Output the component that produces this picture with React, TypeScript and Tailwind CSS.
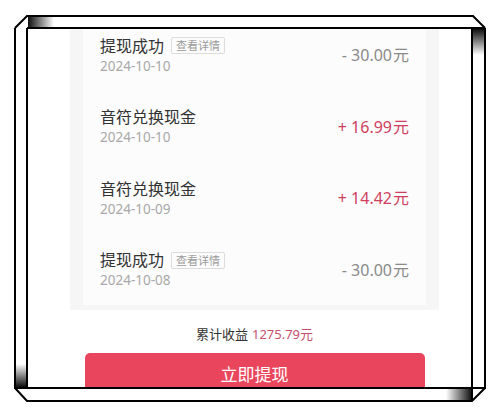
import React from "react";

type Row = { title: string; date: string; amount: string; plus: boolean; badge: boolean };

const rows: Row[] = [
  { title: "提现成功", date: "2024-10-10", amount: "- 30.00", plus: false, badge: true },
  { title: "音符兑换现金", date: "2024-10-10", amount: "+ 16.99", plus: true, badge: false },
  { title: "音符兑换现金", date: "2024-10-09", amount: "+ 14.42", plus: true, badge: false },
  { title: "提现成功", date: "2024-10-08", amount: "- 30.00", plus: false, badge: true },
];

function Frame() {
  return (
    <svg className="absolute left-0 top-0 pointer-events-none" width="500" height="418" viewBox="0 0 500 418">
      <defs>
        <linearGradient id="gTop" x1="0" y1="0" x2="1" y2="0">
          <stop offset="0" stopColor="#000" stopOpacity="0.95" />
          <stop offset="1" stopColor="#000" stopOpacity="0" />
        </linearGradient>
        <linearGradient id="gRight" x1="0" y1="0" x2="0" y2="1">
          <stop offset="0" stopColor="#000" stopOpacity="0.95" />
          <stop offset="1" stopColor="#000" stopOpacity="0" />
        </linearGradient>
        <linearGradient id="gLeft" x1="0" y1="1" x2="0" y2="0">
          <stop offset="0" stopColor="#000" stopOpacity="0.95" />
          <stop offset="1" stopColor="#000" stopOpacity="0" />
        </linearGradient>
        <linearGradient id="gBottom" x1="1" y1="0" x2="0" y2="0">
          <stop offset="0" stopColor="#000" stopOpacity="0.95" />
          <stop offset="1" stopColor="#000" stopOpacity="0" />
        </linearGradient>
      </defs>
      <rect x="28" y="17" width="26" height="10" fill="url(#gTop)" />
      <rect x="473" y="29" width="11" height="26" fill="url(#gRight)" />
      <rect x="16" y="364" width="10" height="23" fill="url(#gLeft)" />
      <rect x="446" y="389" width="26" height="11" fill="url(#gBottom)" />
      <g fill="none" stroke="#000" strokeWidth="2" strokeLinejoin="miter">
        <polyline points="15,28 27,16 473,16 485,28" />
        <line x1="27" y1="28" x2="485" y2="28" />
        <line x1="15" y1="28" x2="15" y2="388" />
        <line x1="27" y1="28" x2="27" y2="388" />
        <line x1="472" y1="28" x2="472" y2="401" />
        <line x1="485" y1="28" x2="485" y2="388" />
        <line x1="14" y1="388" x2="486" y2="388" />
        <polyline points="15,388 27,401 472,401 485,388" />
      </g>
    </svg>
  );
}

export default function App() {
  return (
    <div
      className="relative w-[500px] h-[418px] bg-white overflow-hidden"
      style={{ fontFamily: '"Noto Sans", "Noto Sans CJK SC", sans-serif' }}
    >
      <div className="pt-[29px] pl-[28px]">
        <div className="w-[453px] h-[359px] overflow-hidden bg-white flex flex-col items-center">
          <div className="mt-[-10px] w-[369px] bg-[#f6f6f6] px-[13px] pb-[5px]">
            <div className="bg-[#fcfcfc] px-[17px]">
              {rows.map((r, i) => (
                <div key={i} className="h-[71.5px] flex items-center justify-between">
                  <div className="flex flex-col">
                    <div className="flex items-center h-[22px]">
                      <span className="text-[16px] leading-[22px] text-[#333]">{r.title}</span>
                      {r.badge && (
                        <span className="ml-[7px] h-[17px] px-[4px] flex items-center border border-[#dcdcdc] rounded-[2px] text-[11px] leading-none text-[#9a9a9a]">
                          查看详情
                        </span>
                      )}
                    </div>
                    <span className="text-[13.5px] leading-[18px] text-[#a8a8a8]">{r.date}</span>
                  </div>
                  <span
                    className={
                      "text-[16px] leading-[22px] mt-[1px] " + (r.plus ? "text-[#cf3f5e]" : "text-[#8a8a8a]")
                    }
                  >
                    {r.amount}
                    <span className="ml-[1px]">元</span>
                  </span>
                </div>
              ))}
            </div>
          </div>
          <div className="mt-[14px] h-[20px] flex items-center text-[13px] leading-[20px]">
            <span className="text-[#333]">累计收益</span>
            <span className="ml-[4px] text-[#c4506d]">1275.79元</span>
          </div>
          <div className="mt-[9px] w-[340px] h-[44px] shrink-0 rounded-[5px] bg-[#e9465d] flex items-center justify-center text-white text-[17px]">
            立即提现
          </div>
        </div>
      </div>
      <Frame />
    </div>
  );
}
